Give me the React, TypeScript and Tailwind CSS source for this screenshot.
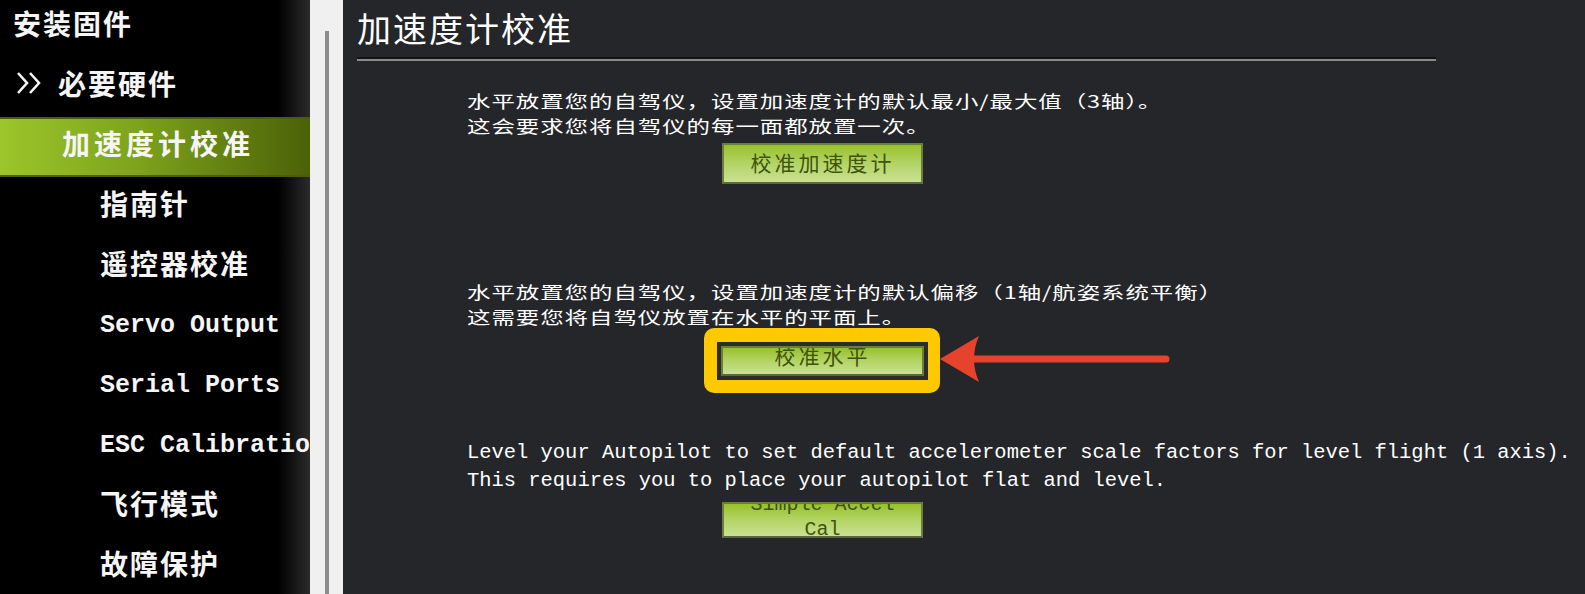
import React from "react";

const cjk = "font-['Noto_Sans_CJK_SC',sans-serif]";
const mono = "font-['Liberation_Mono','Noto_Sans_CJK_SC',monospace]";

function NavRow({
  children,
  pl,
  selected,
  en,
}: {
  children: React.ReactNode;
  pl: string;
  selected?: boolean;
  en?: boolean;
}) {
  return (
    <div
      className={
        "flex h-[60px] items-center " +
        (en ? "pb-[2px] " : "pb-[8px] ") +
        pl +
        (selected
          ? " border-y-2 border-[#4a5d0a] bg-[linear-gradient(to_right,#9cc62a,#7da21c_45%,#4b6108)]"
          : "")
      }
    >
      {children}
    </div>
  );
}

function CnLabel({ text, wide }: { text: string; wide?: boolean }) {
  return (
    <span
      className={
        cjk +
        " whitespace-nowrap text-[28px] font-bold leading-[34px] text-[#f5f5f5] " +
        (wide ? "tracking-[4px]" : "tracking-[2px]")
      }
    >
      {text}
    </span>
  );
}

function EnLabel({ text }: { text: string }) {
  return (
    <span
      className={
        mono +
        " whitespace-nowrap text-[25px] font-bold leading-[30px] text-[#f5f5f5]"
      }
    >
      {text}
    </span>
  );
}

function GreenButton({
  children,
  className,
}: {
  children: React.ReactNode;
  className?: string;
}) {
  return (
    <div
      className={
        "flex flex-col items-center overflow-hidden border-2 border-[#6a7f3a] border-b-[#5a6644] bg-[linear-gradient(to_bottom,#98c12b,#b3d466_50%,#c9e192)] text-[#3f540c] " +
        (className ?? "")
      }
    >
      {children}
    </div>
  );
}

function CnPara({ lines }: { lines: string[] }) {
  return (
    <div
      className={
        cjk +
        " origin-left scale-x-[1.38] text-[17px] leading-[25px] tracking-[0.68px] text-white"
      }
    >
      {lines.map((l) => (
        <div key={l} className="whitespace-nowrap">
          {l}
        </div>
      ))}
    </div>
  );
}

export default function App() {
  return (
    <div className="relative flex h-[594px] w-[1585px] overflow-hidden bg-[#252629]">
      {/* Sidebar */}
      <div className="w-[310px] shrink-0 bg-[linear-gradient(to_right,#000_0,#000_278px,#2b2b2c_310px)]">
        <div className="-mt-[3px]">
          <NavRow pl="pl-[13px]">
            <CnLabel text="安装固件" />
          </NavRow>
          <NavRow pl="pl-[16px]">
            <svg width="26" height="24" viewBox="0 0 26 24" className="mr-[16px]">
              <polyline points="2,2 11,12 2,22" fill="none" stroke="#f5f5f5" strokeWidth="2.6" />
              <polyline points="14,2 23,12 14,22" fill="none" stroke="#f5f5f5" strokeWidth="2.6" />
            </svg>
            <CnLabel text="必要硬件" />
          </NavRow>
          <NavRow pl="pl-[62px]" selected>
            <CnLabel text="加速度计校准" wide />
          </NavRow>
          <NavRow pl="pl-[100px]">
            <CnLabel text="指南针" />
          </NavRow>
          <NavRow pl="pl-[100px]">
            <CnLabel text="遥控器校准" />
          </NavRow>
          <NavRow pl="pl-[100px]" en>
            <EnLabel text="Servo Output" />
          </NavRow>
          <NavRow pl="pl-[100px]" en>
            <EnLabel text="Serial Ports" />
          </NavRow>
          <NavRow pl="pl-[100px]" en>
            <div className="w-[210px] overflow-hidden">
              <EnLabel text="ESC Calibration" />
            </div>
          </NavRow>
          <NavRow pl="pl-[100px]">
            <CnLabel text="飞行模式" />
          </NavRow>
          <NavRow pl="pl-[100px]">
            <CnLabel text="故障保护" />
          </NavRow>
        </div>
      </div>

      {/* Scroll strip */}
      <div className="flex w-[33px] shrink-0 justify-center bg-[#f0f0f0] pt-[31px]">
        <div className="ml-[1px] w-[4px] bg-[#8c8c8c]" />
      </div>

      {/* Content */}
      <div className="flex-1 bg-[#252629]">
        <div className="pl-[14px] pt-[8px]">
          <div
            className={
              cjk +
              " whitespace-nowrap text-[34px] leading-[40px] tracking-[2px] text-white"
            }
          >
            加速度计校准
          </div>
          <div className="mt-[9px] w-[1079px]">
            <div className="h-[2px] bg-[#131313]" />
            <div className="h-[2px] bg-[#8a8a8a]" />
          </div>
        </div>

        <div className="pl-[124px]">
          <div className="mt-[27px]">
            <CnPara
              lines={[
                "水平放置您的自驾仪，设置加速度计的默认最小/最大值（3轴）。",
                "这会要求您将自驾仪的每一面都放置一次。",
              ]}
            />
          </div>

          <GreenButton className="ml-[255px] mt-[5px] h-[41px] w-[201px] justify-center">
            <span className={cjk + " pb-[3px] text-[21px] leading-[26px] tracking-[3px]"}>
              校准加速度计
            </span>
          </GreenButton>

          <div className="mt-[95px]">
            <CnPara
              lines={[
                "水平放置您的自驾仪，设置加速度计的默认偏移（1轴/航姿系统平衡）",
                "这需要您将自驾仪放置在水平的平面上。",
              ]}
            />
          </div>

          <div className="-mt-[1px] ml-[237px] h-[65px] w-[236px] rounded-[10px] bg-[#ffc900] pl-[13px] pt-[14px]">
            <div className="h-[38px] w-[211px] border-4 border-[#2c2c2c]">
              <GreenButton className="h-full w-full justify-center">
                <span className={cjk + " pb-[12px] text-[21px] leading-[24px] tracking-[3px]"}>
                  校准水平
                </span>
              </GreenButton>
            </div>
          </div>

          <div
            className={
              mono + " mt-[46px] text-[20.45px] leading-[28px] text-white"
            }
          >
            <div className="whitespace-nowrap">
              Level your Autopilot to set default accelerometer scale factors for level flight (1 axis).
            </div>
            <div className="whitespace-nowrap">
              This requires you to place your autopilot flat and level.
            </div>
          </div>

          <GreenButton className="ml-[255px] mt-[7px] h-[36px] w-[201px] justify-start">
            <span className={mono + " -mt-[12px] shrink-0 text-[20px] leading-[25px]"}>Simple Accel</span>
            <span className={mono + " shrink-0 text-[20px] leading-[25px]"}>Cal</span>
          </GreenButton>
        </div>
      </div>

      {/* Red annotation arrow */}
      <svg
        className="absolute left-[936px] top-[328px]"
        width="240"
        height="62"
        viewBox="0 0 240 62"
      >
        <line x1="38" y1="31" x2="230" y2="31" stroke="#e7422c" strokeWidth="7" strokeLinecap="round" />
        <path d="M4 31 L43 8 Q 33 31 43 54 Z" fill="#e7422c" />
      </svg>
    </div>
  );
}
